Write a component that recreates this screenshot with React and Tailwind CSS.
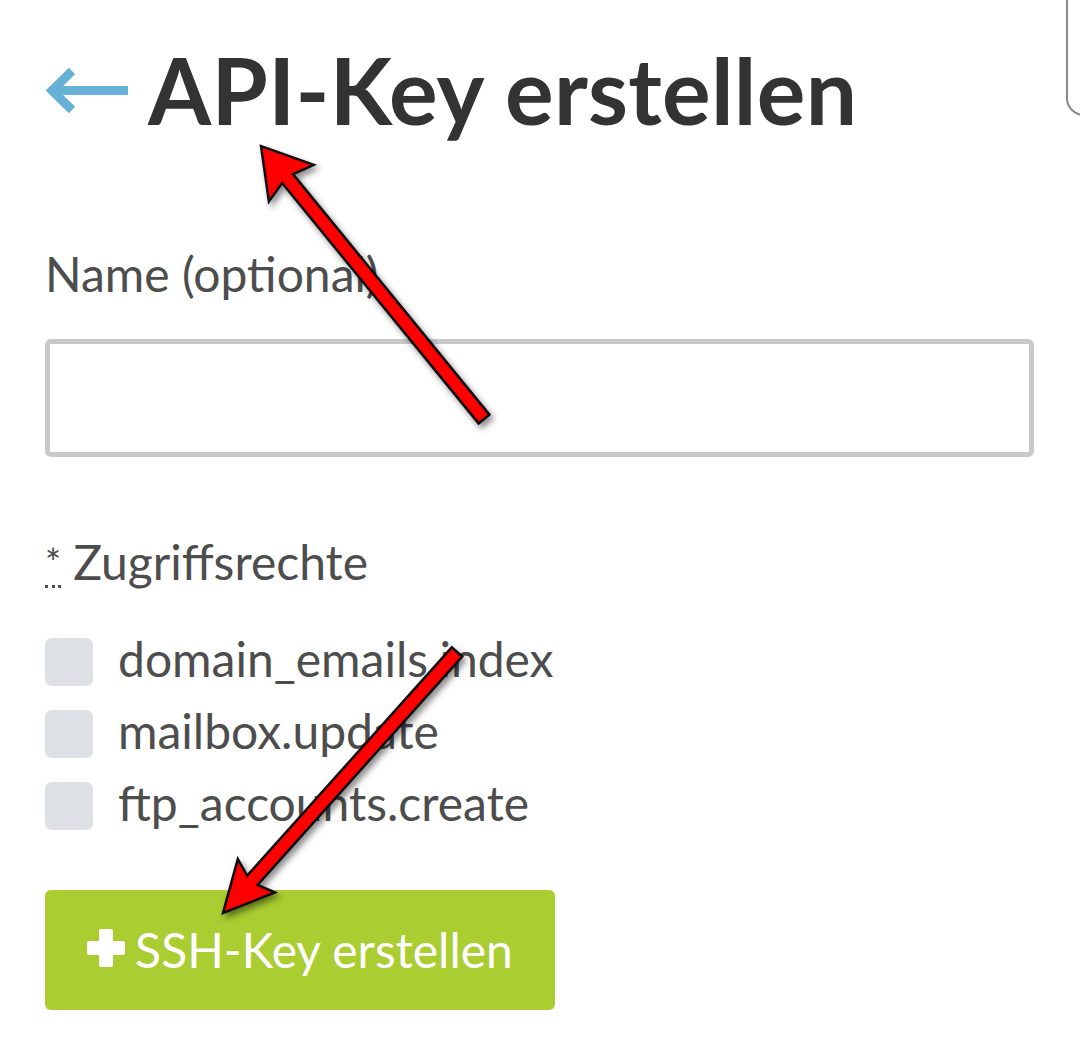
import React from "react";

// builds a flat arrow polygon from tip to tail
const arrowPoints = (tip, tail, head = 50, wing = 27, shaft = 7) => {
  const dx = tail[0] - tip[0];
  const dy = tail[1] - tip[1];
  const len = Math.hypot(dx, dy);
  const u = [dx / len, dy / len];
  const n = [-u[1], u[0]];
  const p = (base, a, b) => [base[0] + u[0] * a + n[0] * b, base[1] + u[1] * a + n[1] * b];
  const pts = [
    tip,
    p(tip, head, wing),
    p(tip, head - 6, shaft),
    p(tail, 0, shaft),
    p(tail, 0, -shaft),
    p(tip, head - 6, -shaft),
    p(tip, head, -wing),
  ];
  return pts.map((q) => q.map((v) => v.toFixed(1)).join(",")).join(" ");
};

const permissions = ["domain_emails.index", "mailbox.update", "ftp_accounts.create"];

const App = () => {
  return (
    <div className="relative w-full min-h-[1064px] overflow-hidden bg-white pl-[45px] pr-[46px] font-['Lato','Liberation_Sans',sans-serif]">
      {/* corner of the panel behind */}
      <div className="absolute right-[-20px] top-[-20px] w-[34px] h-[136px] border-l-2 border-b-2 border-[#8a8a8a] rounded-bl-[18px]"></div>

      {/* Header */}
      <div className="flex items-center pt-[45px]">
        <svg width="83" height="48" viewBox="0 0 83 48" className="shrink-0 mr-[20px] mt-[3px]">
          <path d="M6 22.5 H83" stroke="#67b1d6" strokeWidth="9" fill="none" />
          <path d="M27 3 L7 22.5 L27 42" stroke="#67b1d6" strokeWidth="9" fill="none" strokeLinejoin="miter" />
        </svg>
        <h1 className="text-[91px] leading-[90px] font-bold text-[#333333] tracking-[0.3px]">
          API-Key erstellen
        </h1>
      </div>

      {/* Name */}
      <label className="block mt-[115px] text-[48px] leading-[48px] text-[#4d4d4d]">
        Name (optional)
      </label>
      <input
        type="text"
        className="block mt-[41px] w-full h-[118px] border-[5px] border-[#c9c9c9] rounded-[6px] outline-none"
      />

      {/* Zugriffsrechte */}
      <div className="mt-[81px] text-[48px] leading-[48px] text-[#4d4d4d]">
        <abbr title="Pflichtfeld" className="text-[38px] no-underline border-b-[3px] border-dotted border-[#4d4d4d] align-top mr-[12px]">
          *
        </abbr>
        Zugriffsrechte
      </div>

      <div className="mt-[52px] flex flex-col gap-[24px]">
        {permissions.map((p) => (
          <div key={p} className="flex items-center h-[48px]">
            <span className="w-[48px] h-[48px] rounded-[7px] bg-[#dde0e5] shrink-0"></span>
            <span className="ml-[25px] mb-[6px] text-[48px] leading-[48px] text-[#4d4d4d]">{p}</span>
          </div>
        ))}
      </div>

      {/* Button */}
      <button className="mt-[60px] w-[510px] h-[120px] rounded-[6px] bg-[#aacd31] flex items-center justify-center text-white text-[48px] leading-[48px]">
        <svg width="38" height="38" viewBox="0 0 38 38" className="mr-[10px] mb-[4px]">
          <path d="M14 0 h10 a2 2 0 0 1 2 2 v10 h10 a2 2 0 0 1 2 2 v10 a2 2 0 0 1 -2 2 h-10 v10 a2 2 0 0 1 -2 2 h-10 a2 2 0 0 1 -2 -2 v-10 h-10 a2 2 0 0 1 -2 -2 v-10 a2 2 0 0 1 2 -2 h10 v-10 a2 2 0 0 1 2 -2z" fill="white" />
        </svg>
        SSH-Key erstellen
      </button>

      {/* red annotation arrows */}
      <svg className="absolute left-0 top-0 pointer-events-none" width="1080" height="1064">
        <defs>
          <filter id="sh" x="-20%" y="-20%" width="140%" height="140%">
            <feDropShadow dx="3" dy="4" stdDeviation="3" floodColor="#000" floodOpacity="0.45" />
          </filter>
        </defs>
        <polygon points={arrowPoints([261, 146], [484, 419], 48, 29)} fill="#ff0000" stroke="#111" strokeWidth="2.5" strokeLinejoin="miter" filter="url(#sh)" />
        <polygon points={arrowPoints([223, 913], [457, 652], 50, 25)} fill="#ff0000" stroke="#111" strokeWidth="2.5" strokeLinejoin="miter" filter="url(#sh)" />
      </svg>
    </div>
  );
};

export default App;
